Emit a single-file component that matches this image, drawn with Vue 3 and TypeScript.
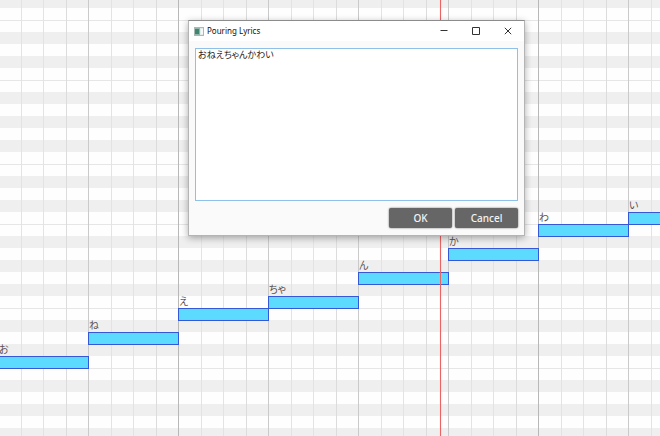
<script setup lang="ts">
import { ref } from 'vue'

interface Note {
  lyric: string
  beat: number
  row: number
}

const BEAT = 90
const ROW = 12

const notes: Note[] = [
  { lyric: 'お', beat: 0, row: 12 },
  { lyric: 'ね', beat: 1, row: 10 },
  { lyric: 'え', beat: 2, row: 8 },
  { lyric: 'ちゃ', beat: 3, row: 7 },
  { lyric: 'ん', beat: 4, row: 5 },
  { lyric: 'か', beat: 5, row: 3 },
  { lyric: 'わ', beat: 6, row: 1 },
  { lyric: 'い', beat: 7, row: 0 },
]

const lyrics = ref('おねえちゃんかわい')

const place = (note: Note) => ({
  left: `${note.beat * BEAT - 2}px`,
  top: `${note.row * ROW + 212}px`,
})
</script>

<template>
  <main class="roll">
    <div v-for="note in notes" :key="note.beat" class="note" :style="place(note)">
      <span class="lyric">{{ note.lyric }}</span>
    </div>
    <div class="playhead"></div>

    <section class="dialog" role="dialog" aria-labelledby="dialog-title">
      <header class="titlebar">
        <svg class="app-icon" viewBox="0 0 10 9" aria-hidden="true">
          <rect x="0.5" y="0.5" width="9" height="8" fill="#e4ece9" stroke="#a9b9b4" />
          <rect x="1" y="1" width="5" height="7" fill="#8fb8ab" />
          <rect x="1" y="2" width="4" height="5" fill="#3f8573" />
          <rect x="7" y="2" width="2" height="5" fill="#f6f8f7" />
        </svg>
        <h1 id="dialog-title" class="title">Pouring Lyrics</h1>
        <button class="control" type="button" aria-label="Minimize">
          <svg viewBox="0 0 8 8"><path d="M0.5 3.5H7.5" /></svg>
        </button>
        <button class="control" type="button" aria-label="Maximize">
          <svg viewBox="0 0 8 8"><path d="M0.5 0.5H7.5V7.5H0.5Z" /></svg>
        </button>
        <button class="control" type="button" aria-label="Close">
          <svg viewBox="0 0 8 8"><path d="M0.8 0.8L7.2 7.2M7.2 0.8L0.8 7.2" /></svg>
        </button>
      </header>
      <div class="body">
        <textarea v-model="lyrics" class="text" aria-labelledby="dialog-title" spellcheck="false"></textarea>
        <footer class="actions">
          <button class="action" type="button">OK</button>
          <button class="action" type="button">Cancel</button>
        </footer>
      </div>
    </section>
  </main>
</template>

<style>
body {
  margin: 0;
}
</style>

<style scoped>
.roll {
  position: relative;
  height: 100vh;
  overflow: hidden;
  font-family: "Noto Sans", "Noto Sans CJK JP", sans-serif;
  background-color: #fefefe;
  background-image:
    linear-gradient(90deg, #b8b8b8 1px, transparent 1px),
    linear-gradient(90deg,
      #cacaca 1px, transparent 1px 23px,
      #e3e3e3 23px 24px, transparent 24px 45px,
      #e3e3e3 45px 46px, transparent 46px 68px,
      #dcdcdc 68px 69px, transparent 69px),
    linear-gradient(
      #e6e6e6 1px, transparent 1px 12px,
      #efefef 12px 24px, transparent 24px 36px,
      #efefef 36px 48px, transparent 48px 60px,
      #e6e6e6 60px 61px, transparent 61px 72px,
      #efefef 72px 84px, transparent 84px 96px,
      #efefef 96px 108px, transparent 108px 120px,
      #efefef 120px 132px, transparent 132px);
  background-size: 360px 100%, 90px 100%, 100% 144px;
  background-position: 178px 0, -2px 0, 0 20px;
}

.note {
  position: absolute;
  box-sizing: border-box;
  width: 91px;
  height: 13px;
  border: 1px solid #3558d8;
  background: #5cdbff;
}

.lyric {
  position: absolute;
  left: 0;
  bottom: 12px;
  font-family: "Noto Sans CJK JP", sans-serif;
  font-size: 10px;
  line-height: 14px;
  font-feature-settings: "palt";
  white-space: nowrap;
  color: #5a5252;
}

.playhead {
  position: absolute;
  top: 0;
  bottom: 0;
  left: 440px;
  width: 1px;
  background: #ea6464;
  box-shadow: 0 0 1px #f4a0a0;
}

.dialog {
  position: absolute;
  left: 188px;
  top: 20px;
  width: 337px;
  box-sizing: border-box;
  border: 1px solid #b4b4b4;
  border-top-color: #8c8c8c;
  background: #fafafa;
  box-shadow: 0 2px 7px rgba(0, 0, 0, 0.32);
}

.titlebar {
  display: flex;
  align-items: center;
  height: 20px;
  padding-left: 5px;
  background: #ffffff;
}

.app-icon {
  width: 10px;
  height: 9px;
}

.title {
  flex: 1;
  margin: 0 0 0 3px;
  font-size: 8px;
  font-weight: 400;
  line-height: 12px;
  color: #111111;
}

.control {
  display: flex;
  align-items: center;
  justify-content: center;
  width: 32px;
  height: 20px;
  padding: 0;
  border: 0;
  background: transparent;
}

.control svg {
  width: 8px;
  height: 8px;
  fill: none;
  stroke: #333333;
  stroke-width: 1;
}

.body {
  display: flex;
  flex-direction: column;
  gap: 7px;
  padding: 7px 6px;
}

.text {
  display: block;
  box-sizing: border-box;
  height: 153px;
  padding: 0 2px;
  border: 1px solid #8fc1e8;
  outline: none;
  resize: none;
  background: #ffffff;
  font-family: "Noto Sans CJK JP", sans-serif;
  font-size: 9px;
  line-height: 11px;
  font-feature-settings: "palt";
  color: #222222;
}

.actions {
  display: flex;
  justify-content: flex-end;
  gap: 3px;
}

.action {
  width: 63px;
  height: 20px;
  padding: 0;
  border: 0;
  border-radius: 2px;
  background: #666666;
  box-shadow: 0 0 2px rgba(0, 0, 0, 0.6);
  font-family: "Noto Sans", sans-serif;
  font-size: 10px;
  font-weight: 500;
  line-height: 20px;
  color: #f4f4f4;
}
</style>
